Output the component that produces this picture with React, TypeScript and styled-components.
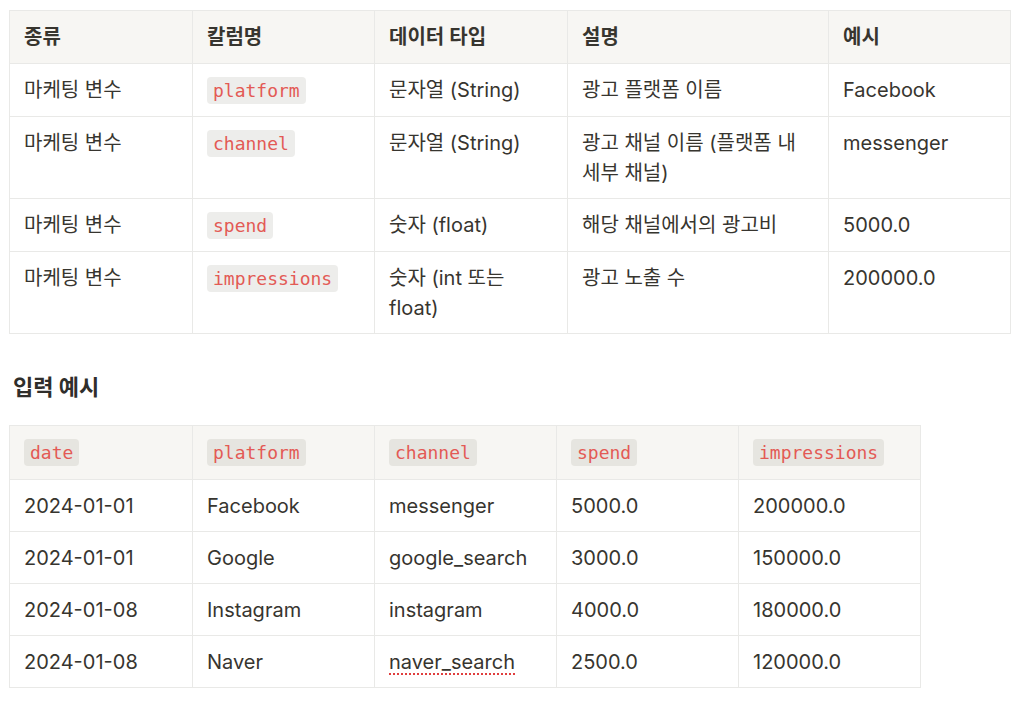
import React from 'react';
import styled, {createGlobalStyle} from "styled-components";

const GlobalStyle = createGlobalStyle`
  html, body {
    margin: 0;
    padding: 0;
    background: #ffffff;
  }
  body {
    font-family: Inter, "Noto Sans CJK KR", sans-serif;
    color: #37352f;
  }
`

type Cell = { text: string, code?: boolean, misspelled?: boolean }

const specHead = ['종류', '칼럼명', '데이터 타입', '설명', '예시']
const specRows: Cell[][] = [
  [{text: '마케팅 변수'}, {text: 'platform', code: true}, {text: '문자열 (String)'}, {text: '광고 플랫폼 이름'}, {text: 'Facebook'}],
  [{text: '마케팅 변수'}, {text: 'channel', code: true}, {text: '문자열 (String)'}, {text: '광고 채널 이름 (플랫폼 내 세부 채널)'}, {text: 'messenger'}],
  [{text: '마케팅 변수'}, {text: 'spend', code: true}, {text: '숫자 (float)'}, {text: '해당 채널에서의 광고비'}, {text: '5000.0'}],
  [{text: '마케팅 변수'}, {text: 'impressions', code: true}, {text: '숫자 (int 또는 float)'}, {text: '광고 노출 수'}, {text: '200000.0'}],
]

const sampleHead = ['date', 'platform', 'channel', 'spend', 'impressions']
const sampleRows: Cell[][] = [
  [{text: '2024-01-01'}, {text: 'Facebook'}, {text: 'messenger'}, {text: '5000.0'}, {text: '200000.0'}],
  [{text: '2024-01-01'}, {text: 'Google'}, {text: 'google_search'}, {text: '3000.0'}, {text: '150000.0'}],
  [{text: '2024-01-08'}, {text: 'Instagram'}, {text: 'instagram'}, {text: '4000.0'}, {text: '180000.0'}],
  [{text: '2024-01-08'}, {text: 'Naver'}, {text: 'naver_search', misspelled: true}, {text: '2500.0'}, {text: '120000.0'}],
]

const renderCell = (cell: Cell) => {
  if (cell.code) return <Code>{cell.text}</Code>
  if (cell.misspelled) return <Misspelled>{cell.text}</Misspelled>
  return cell.text
}

export default function App() {
  return (
    <Page>
      <GlobalStyle/>
      <Table $width={1001}>
        <colgroup>
          {[183, 182, 193, 261, 182].map((w, i) => <col key={i} style={{width: w}}/>)}
        </colgroup>
        <thead>
          <tr>
            {specHead.map(h => <HeadCell key={h}>{h}</HeadCell>)}
          </tr>
        </thead>
        <tbody>
          {specRows.map((row, r) => (
            <tr key={r}>
              {row.map((cell, c) => <BodyCell key={c}>{renderCell(cell)}</BodyCell>)}
            </tr>
          ))}
        </tbody>
      </Table>

      <Heading>입력 예시</Heading>

      <Table $width={911}>
        <colgroup>
          {[183, 182, 182, 182, 182].map((w, i) => <col key={i} style={{width: w}}/>)}
        </colgroup>
        <thead>
          <tr>
            {sampleHead.map(h => <HeadCell key={h}><Code>{h}</Code></HeadCell>)}
          </tr>
        </thead>
        <tbody>
          {sampleRows.map((row, r) => (
            <tr key={r}>
              {row.map((cell, c) => <BodyCell key={c}>{renderCell(cell)}</BodyCell>)}
            </tr>
          ))}
        </tbody>
      </Table>
    </Page>
  )
}

const Page = styled.div`
  padding: 10px 9px 20px;
  display: flex;
  flex-direction: column;
  align-items: flex-start;
`
const Table = styled.table<{ $width: number }>`
  width: ${p => p.$width}px;
  table-layout: fixed;
  border-collapse: collapse;
  font-size: 20px;
  line-height: 30px;
`
const HeadCell = styled.th`
  text-align: left;
  vertical-align: top;
  font-weight: 600;
  background: #f7f6f3;
  border: 1px solid #e9e9e7;
  padding: 11px 14px 11px;
  height: 30px;
`
const BodyCell = styled.td`
  vertical-align: top;
  border: 1px solid #e9e9e7;
  padding: 11px 14px 10px;
  word-break: keep-all;
`
const Code = styled.code`
  font-family: "DejaVu Sans Mono", "Liberation Mono", monospace;
  font-size: 18px;
  font-weight: 400;
  color: #e35a55;
  background: rgba(135, 131, 120, 0.15);
  border-radius: 4px;
  padding: 3px 6px;
`
const Misspelled = styled.span`
  text-decoration: underline dotted #e03e3e;
  text-decoration-thickness: 2px;
  text-underline-offset: 4px;
`
const Heading = styled.h3`
  margin: 38px 0 23px 4px;
  font-size: 22px;
  line-height: 30px;
  font-weight: 700;
  color: #2f2e2b;
`
